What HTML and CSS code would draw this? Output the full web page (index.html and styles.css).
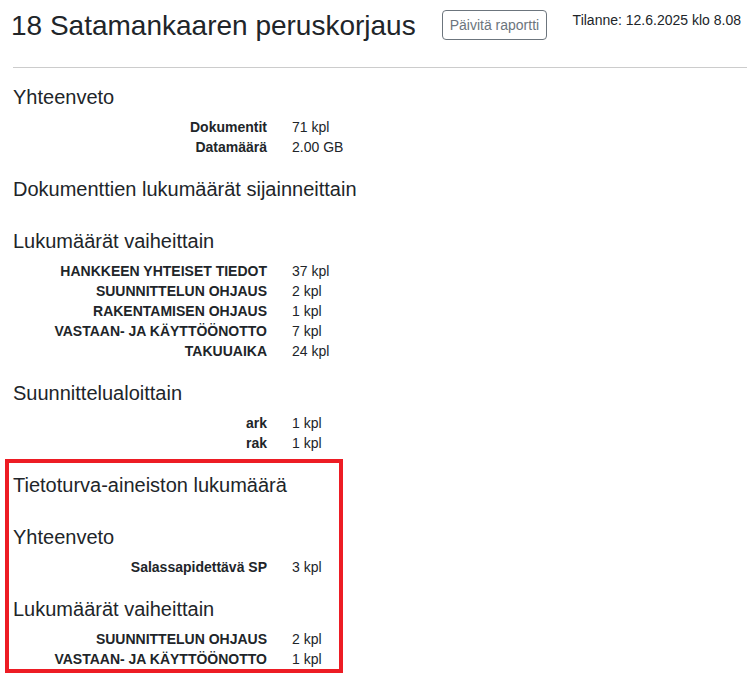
FILE: index.html
```html
<!DOCTYPE html>
<html lang="fi">
<head>
<meta charset="utf-8">
<title>18 Satamankaaren peruskorjaus</title>
<link rel="stylesheet" href="styles.css">
</head>
<body>
<div class="page">
  <header class="header">
    <h1 class="title">18 Satamankaaren peruskorjaus</h1>
    <button class="btn" type="button">Päivitä raportti</button>
    <div class="status">Tilanne: 12.6.2025 klo 8.08</div>
  </header>
  <hr class="rule">
  <main class="content">
    <h3 class="heading">Yhteenveto</h3>
    <div class="stats">
      <div class="label">Dokumentit</div><div class="value">71 kpl</div>
      <div class="label">Datamäärä</div><div class="value">2.00 GB</div>
    </div>

    <h3 class="heading">Dokumenttien lukumäärät sijainneittain</h3>
    <div class="stats"></div>

    <h3 class="heading">Lukumäärät vaiheittain</h3>
    <div class="stats">
      <div class="label">HANKKEEN YHTEISET TIEDOT</div><div class="value">37 kpl</div>
      <div class="label">SUUNNITTELUN OHJAUS</div><div class="value">2 kpl</div>
      <div class="label">RAKENTAMISEN OHJAUS</div><div class="value">1 kpl</div>
      <div class="label">VASTAAN- JA KÄYTTÖÖNOTTO</div><div class="value">7 kpl</div>
      <div class="label">TAKUUAIKA</div><div class="value">24 kpl</div>
    </div>

    <h3 class="heading">Suunnittelualoittain</h3>
    <div class="stats">
      <div class="label">ark</div><div class="value">1 kpl</div>
      <div class="label">rak</div><div class="value">1 kpl</div>
    </div>

    <section class="highlight">
      <h3 class="heading">Tietoturva-aineiston lukumäärä</h3>
      <div class="stats"></div>

      <h3 class="heading">Yhteenveto</h3>
      <div class="stats">
        <div class="label">Salassapidettävä SP</div><div class="value">3 kpl</div>
      </div>

      <h3 class="heading">Lukumäärät vaiheittain</h3>
      <div class="stats">
        <div class="label">SUUNNITTELUN OHJAUS</div><div class="value">2 kpl</div>
        <div class="label">VASTAAN- JA KÄYTTÖÖNOTTO</div><div class="value">1 kpl</div>
      </div>
    </section>
  </main>
</div>
</body>
</html>
```

FILE: styles.css
```css
html, body {
  margin: 0;
  padding: 0;
  background: #ffffff;
}

body {
  font-family: "Liberation Sans", Arial, sans-serif;
  color: #212529;
  font-size: 14px;
  line-height: 20px;
}

.page {
  padding-left: 13px;
  overflow: hidden;
}

.header {
  display: flex;
  align-items: flex-start;
  height: 67px;
  box-sizing: border-box;
  padding: 10px 6px 0 0;
}

.title {
  margin: -1px 26px 0 -2px;
  font-size: 28px;
  font-weight: 400;
  line-height: 34px;
  white-space: nowrap;
}

.btn {
  height: 30px;
  box-sizing: border-box;
  padding: 0 7px;
  border: 1px solid #6c757d;
  border-radius: 4px;
  background: #ffffff;
  color: #6c757d;
  font-family: "Liberation Sans", Arial, sans-serif;
  font-size: 14px;
  line-height: 28px;
  white-space: nowrap;
}

.status {
  margin-left: auto;
  font-size: 14px;
  line-height: 20px;
  white-space: nowrap;
}

.rule {
  margin: 0;
  height: 0;
  border: 0;
  border-top: 1px solid #cccccc;
}

.content {
  display: flex;
  flex-direction: column;
  padding-top: 17px;
}

.heading {
  margin: 0 0 8px;
  font-size: 20px;
  font-weight: 400;
  line-height: 24px;
}

.stats {
  display: grid;
  grid-template-columns: 254px auto;
  justify-content: start;
  margin-bottom: 20px;
}

.label {
  text-align: right;
  font-weight: 700;
  white-space: nowrap;
}

.value {
  padding-left: 25px;
  white-space: nowrap;
}

.highlight {
  position: relative;
  display: flex;
  flex-direction: column;
}

.highlight::after {
  content: "";
  position: absolute;
  top: -14px;
  left: -8px;
  width: 338px;
  height: 214px;
  box-sizing: border-box;
  border: 4px solid #ed1c24;
  pointer-events: none;
}
```
